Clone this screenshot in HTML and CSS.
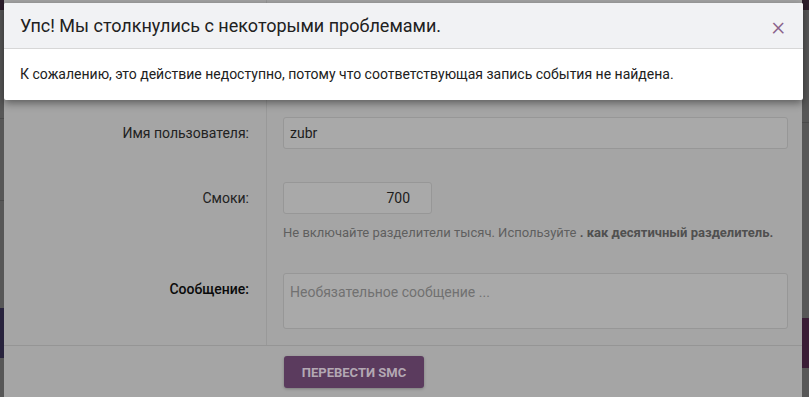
FILE: index.html
```html
<!DOCTYPE html>
<html lang="ru">
<head>
    <meta charset="UTF-8">
    <meta name="viewport" content="width=device-width, initial-scale=1.0">
    <title>Перевести SMC</title>
    <link rel="stylesheet" href="styles.css">
</head>
<body>

<!-- Затемненная страница под модалками -->
<div class="page">
    <div class="topbar"></div>
    <div class="page-side left">
        <div class="rule r1"></div>
        <div class="rule r2"></div>
        <div class="band"></div>
    </div>
    <div class="page-side right">
        <div class="rule r3"></div>
        <div class="band purple"></div>
    </div>
</div>

<!-- Модалка перевода -->
<div class="transfer-modal">
    <div class="transfer-body">
        <div class="form-row first">
            <label class="form-label">Имя пользователя:</label>
            <div class="form-field">
                <div class="input">zubr</div>
            </div>
        </div>
        <div class="form-row">
            <label class="form-label">Смоки:</label>
            <div class="form-field">
                <div class="input amount">700</div>
                <p class="help">Не включайте разделители тысяч. Используйте <b>. как десятичный разделитель.</b></p>
            </div>
        </div>
        <div class="form-row last">
            <label class="form-label dark">Сообщение:</label>
            <div class="form-field">
                <div class="input textarea">Необязательное сообщение ...</div>
            </div>
        </div>
    </div>
    <div class="transfer-footer">
        <button class="btn-transfer">Перевести SMC</button>
    </div>
</div>

<!-- Окно ошибки -->
<div class="error-modal">
    <div class="error-header">
        <h4>Упс! Мы столкнулись с некоторыми проблемами.</h4>
        <span class="close">&times;</span>
    </div>
    <div class="error-body">
        К сожалению, это действие недоступно, потому что соответствующая запись события не найдена.
    </div>
</div>

</body>
</html>
```

FILE: styles.css
```css
* {
    box-sizing: border-box;
}
html, body {
    height: 100%;
    margin: 0;
    overflow: hidden;
}
body {
    background-color: #575757;
    font-family: Roboto, "Noto Sans", sans-serif;
    position: relative;
}

/* Фон страницы */
.page {
    height: 100%;
}
.topbar {
    height: 10px;
    background-color: #2c1e2c;
}
.page-side {
    position: absolute;
    top: 10px;
    bottom: 0;
    width: 10px;
}
.page-side.left {
    left: 0;
}
.page-side.right {
    right: 0;
}
.rule {
    position: absolute;
    left: 0;
    right: 0;
    height: 1px;
    background-color: #4a4a4a;
}
.r1 { top: 108px; }
.r2 { top: 190px; }
.r3 { top: 112px; }
.band {
    position: absolute;
    left: 0;
    right: 0;
    top: 298px;
    height: 50px;
    background-color: #28233d;
}
.band.purple {
    top: 308px;
    background-color: #3a1d36;
}

/* Модалка перевода (затемнена) */
.transfer-modal {
    position: absolute;
    left: 4px;
    top: 0;
    width: 798px;
    bottom: -10px;
    background-color: #a5a5a5;
    color: #1f1f1f;
    font-size: 14px;
}
.transfer-body {
    border-bottom: 1px solid #959595;
}
.form-row {
    display: grid;
    grid-template-columns: 263px 1fr;
}
.form-label {
    border-right: 1px solid #999;
    text-align: right;
    padding-right: 17px;
    line-height: 32px;
    color: #222;
}
.form-label.dark {
    color: #0a0a0a;
    font-weight: 500;
}
.form-field {
    padding: 0 14px 0 16px;
}
.form-row.first .form-label,
.form-row.first .form-field {
    padding-top: 117px;
}
.form-row + .form-row .form-label,
.form-row + .form-row .form-field {
    padding-top: 33px;
}
.form-row.last .form-label,
.form-row.last .form-field {
    padding-top: 31px;
    padding-bottom: 16px;
}
.input {
    height: 32px;
    line-height: 30px;
    border: 1px solid #979797;
    border-radius: 3px;
    background-color: #a9a9a9;
    padding: 0 6px;
    font-size: 14px;
    color: #1d1d1d;
}
.input.amount {
    width: 149px;
    text-align: right;
    padding-right: 21px;
}
.input.textarea {
    height: 56px;
    line-height: 20px;
    padding-top: 8px;
    color: #717171;
}
.help {
    margin: 10px 0 0;
    font-size: 13px;
    line-height: 18px;
    color: #5f5f5f;
}
.help b {
    color: #505050;
}
.transfer-footer {
    padding: 10px 0 0 280px;
}
.btn-transfer {
    height: 32px;
    width: 140px;
    border: none;
    border-radius: 3px;
    background-color: #5b3b5e;
    color: #b3a8b3;
    font-family: inherit;
    font-size: 13px;
    font-weight: bold;
    text-transform: uppercase;
    box-shadow: 0 1px 3px rgba(0, 0, 0, 0.25);
}

/* Окно ошибки */
.error-modal {
    position: absolute;
    left: 4px;
    top: 3px;
    width: 799px;
    background-color: #fff;
    border-radius: 2px;
    box-shadow: 0 3px 8px rgba(0, 0, 0, 0.45);
    overflow: hidden;
}
.error-header {
    display: flex;
    align-items: center;
    justify-content: space-between;
    height: 46px;
    padding: 0 18px 0 16px;
    background-color: #f1f2f4;
    border-bottom: 1px solid #d7d7d7;
}
.error-header h4 {
    margin: 0;
    font-size: 18px;
    font-weight: normal;
    color: #212121;
}
.close {
    color: #8a628a;
    font-size: 26px;
    font-weight: 300;
    line-height: 1;
    cursor: pointer;
}
.error-body {
    padding: 16px;
    line-height: 19px;
    font-size: 14px;
    color: #212121;
}
```
